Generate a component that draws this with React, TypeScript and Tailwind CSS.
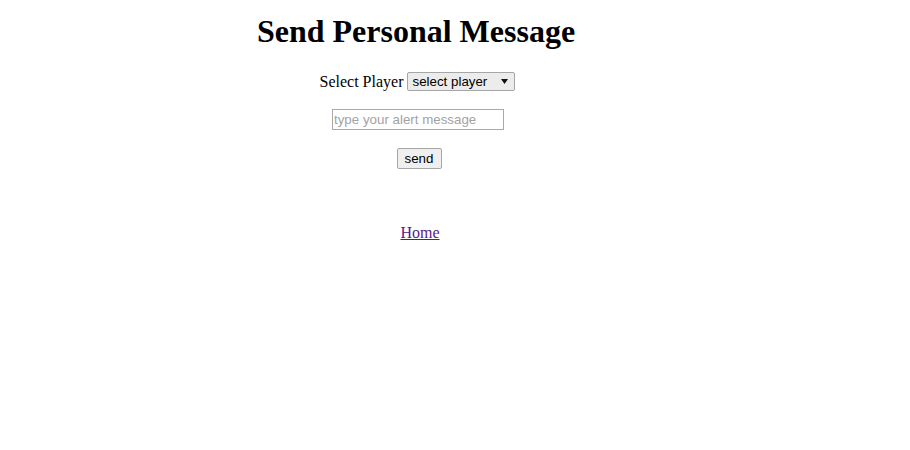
const SelectBox = () => (
    <div className="inline-flex h-[19px] w-[108px] items-center justify-between rounded-[2px] border border-[#a6a6a6] bg-[#ececec] pl-[4px] pr-[6px] font-['Liberation_Sans'] text-[13.33px] leading-none text-black">
        <span>select player</span>
        <svg width="7" height="5" viewBox="0 0 7 5" className="mt-[-1px]">
            <polygon points="0,0 7,0 3.5,5" fill="#111" />
        </svg>
    </div>
);

const App = () => {
    return (
        <div className="min-h-[450px] w-[910px] bg-white">
            <div className="w-[836px] text-center font-['Liberation_Serif',serif] text-black">
                <h1 className="pr-[4px] pt-[13px] text-[32px] font-bold leading-[36px]">
                    Send Personal Message
                </h1>

                <div className="mt-[23px] flex items-center justify-center gap-[4px] pr-[1px] text-[16px] leading-[19px]">
                    <span>Select Player</span>
                    <SelectBox />
                </div>

                <div className="mt-[18px] flex justify-center">
                    <input
                        type="text"
                        placeholder="type your alert message"
                        className="h-[21px] w-[172px] border border-[#a9a9a9] px-[1px] font-['Liberation_Sans'] text-[13.33px] text-black placeholder:text-[#a3a3a3] outline-none"
                    />
                </div>

                <div className="mt-[18px] flex justify-center pl-[2px]">
                    <button className="h-[21px] w-[45px] rounded-[2px] border border-[#a6a6a6] bg-[#efefef] font-['Liberation_Sans'] text-[13.33px] leading-none text-black">
                        send
                    </button>
                </div>

                <div className="mt-[52px] pl-[4px]">
                    <a href="#" className="text-[16px] leading-[19px] text-[#551a8b] underline">
                        Home
                    </a>
                </div>
            </div>
        </div>
    );
};

export default App;
